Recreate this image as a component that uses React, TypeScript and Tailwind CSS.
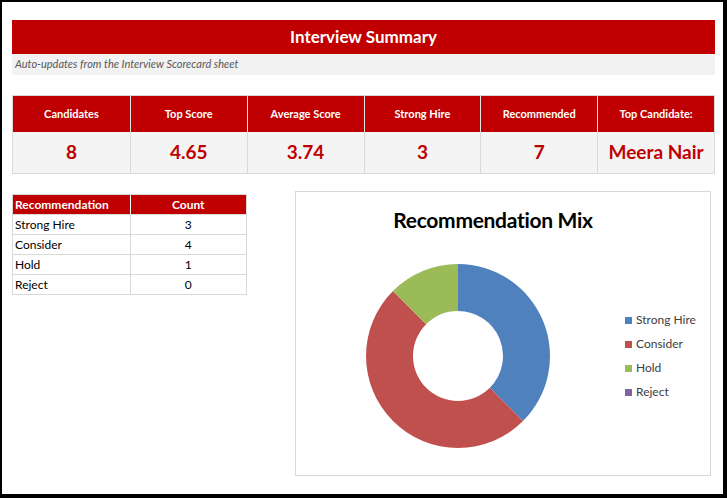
import React from "react";

const heads = ["Candidates", "Top Score", "Average Score", "Strong Hire", "Recommended", "Top Candidate:"];
const vals = ["8", "4.65", "3.74", "3", "7", "Meera Nair"];
const rows: [string, string][] = [["Strong Hire", "3"], ["Consider", "4"], ["Hold", "1"], ["Reject", "0"]];

function arc(cx: number, cy: number, r: number, R: number, a0: number, a1: number) {
  const p = (rad: number, a: number) => {
    const t = ((a - 90) * Math.PI) / 180;
    return `${cx + rad * Math.cos(t)} ${cy + rad * Math.sin(t)}`;
  };
  const large = a1 - a0 > 180 ? 1 : 0;
  return `M ${p(R, a0)} A ${R} ${R} 0 ${large} 1 ${p(R, a1)} L ${p(r, a1)} A ${r} ${r} 0 ${large} 0 ${p(r, a0)} Z`;
}

export default function App() {
  return (
    <div className="w-[727px] h-[498px] bg-white border-l-2 border-t-2 border-b-4 border-r-4 border-black box-border overflow-hidden" style={{ fontFamily: "Lato, 'Open Sans', sans-serif" }}>
      <div className="ml-[10px] mt-[18px] w-[703px]">
        <div className="h-[34px] bg-[#c00000] text-white font-bold text-[17px] flex items-center justify-center">Interview Summary</div>
        <div className="h-[21px] bg-[#f2f2f2] text-[#595959] italic text-[11px] flex items-center pl-[3px]">Auto-updates from the Interview Scorecard sheet</div>
        <div className="mt-[20px] grid grid-cols-6 border border-[#d9d9d9]">
          {heads.map((h, i) => (
            <div key={h} className={`h-[36px] bg-[#c00000] text-white font-bold text-[11px] flex items-center justify-center ${i ? "border-l border-[#e6e6e6]" : ""}`}>{h}</div>
          ))}
          {vals.map((v, i) => (
            <div key={i} className={`h-[41px] bg-[#f4f4f4] text-[#c00000] font-bold text-[19px] flex items-center justify-center ${i ? "border-l border-[#d9d9d9]" : ""}`}>{v}</div>
          ))}
        </div>
        <div className="mt-[17px] flex items-start">
          <div className="w-[235px] border border-[#d9d9d9] mt-[3px]">
            <div className="grid grid-cols-2 h-[19px] bg-[#c00000] text-white font-bold text-[12px]">
              <div className="pl-[2px] flex items-center">Recommendation</div>
              <div className="flex items-center justify-center border-l border-white">Count</div>
            </div>
            {rows.map(([k, v]) => (
              <div key={k} className="grid grid-cols-2 h-[20px] text-[12px] text-black border-t border-[#d9d9d9]">
                <div className="pl-[2px] flex items-center">{k}</div>
                <div className="flex items-center justify-center border-l border-[#d9d9d9]">{v}</div>
              </div>
            ))}
          </div>
          <div className="ml-[48px] w-[416px] h-[285px] border border-[#d9d9d9] relative">
            <div className="text-center pr-[20px] mt-[12px] text-[21px] font-bold text-black tracking-[-0.3px]">Recommendation Mix</div>
            <svg className="absolute left-0 top-0" width="416" height="285">
              <path d={arc(162, 164, 45, 92, 0, 135)} fill="#4f81bd" />
              <path d={arc(162, 164, 45, 92, 135, 315)} fill="#c0504d" />
              <path d={arc(162, 164, 45, 92, 315, 360)} fill="#9bbb59" />
            </svg>
            <div className="absolute left-[329px] top-[121px] flex flex-col gap-[10px] text-[12px] text-[#404040]">
              {[["Strong Hire", "bg-[#4f81bd]"], ["Consider", "bg-[#c0504d]"], ["Hold", "bg-[#9bbb59]"], ["Reject", "bg-[#8064a2]"]].map(([l, c]) => (
                <div key={l} className="flex items-center gap-[4px] h-[14px]">
                  <span className={`w-[7px] h-[7px] ${c}`} />
                  <span>{l}</span>
                </div>
              ))}
            </div>
          </div>
        </div>
      </div>
    </div>
  );
}
